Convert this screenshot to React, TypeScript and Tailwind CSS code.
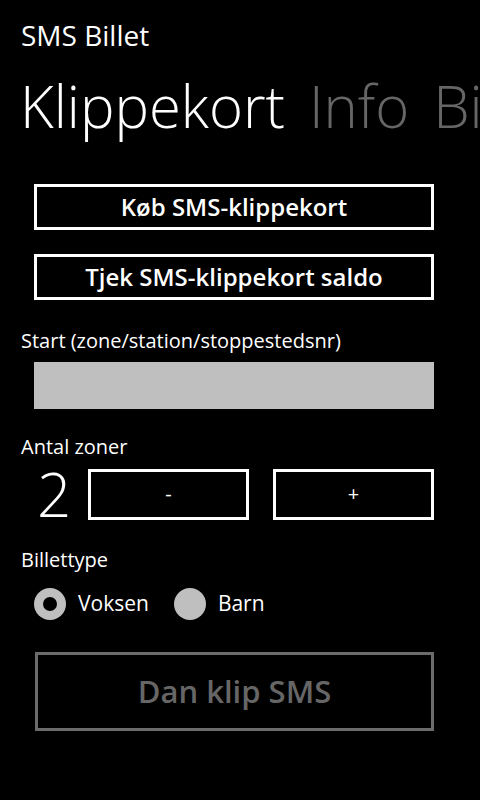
import React from "react";

export default function App() {
  const font = { fontFamily: '"Open Sans", "Noto Sans", sans-serif' };
  return (
    <div className="w-[480px] h-[800px] bg-black text-white overflow-hidden" style={font}>
      <div className="pl-[21px] pt-[16px] text-[28px] leading-[38px]">SMS Billet</div>
      <div className="flex pl-[20px] mt-[12px] gap-[24px] text-[58px] leading-[80px] font-light whitespace-nowrap">
        <span className="text-white">Klippekort</span>
        <span className="text-[#666666]">Info</span>
        <span className="text-[#666666]">Billet</span>
      </div>
      <div className="flex flex-col px-[34px] mt-[38px] w-[468px]">
        <button className="h-[46px] border-[3px] border-white text-[24px] font-semibold flex items-center justify-center">Køb SMS-klippekort</button>
        <button className="h-[46px] mt-[24px] border-[3px] border-white text-[24px] font-semibold flex items-center justify-center">Tjek SMS-klippekort saldo</button>
      </div>
      <div className="pl-[21px] mt-[29px] text-[20px] leading-[24px]">Start (zone/station/stoppestedsnr)</div>
      <div className="mx-[34px] mt-[9px] h-[47px] w-[400px] bg-[#bfbfbf]"></div>
      <div className="pl-[21px] mt-[26px] text-[20px] leading-[24px]">Antal zoner</div>
      <div className="flex items-center pl-[37px] mt-[5px]">
        <span className="w-[51px] text-[60px] leading-[60px] font-light">2</span>
        <button className="w-[161px] h-[51px] border-[3px] border-white text-[20px]">-</button>
        <button className="w-[161px] h-[51px] ml-[24px] border-[3px] border-white text-[20px]">+</button>
      </div>
      <div className="pl-[21px] mt-[24px] text-[20px] leading-[24px]">Billettype</div>
      <div className="flex items-center pl-[34px] mt-[16px]">
        <span className="w-[32px] h-[32px] rounded-full bg-[#bfbfbf] flex items-center justify-center">
          <span className="w-[14px] h-[14px] rounded-full bg-black"></span>
        </span>
        <span className="ml-[12px] text-[21px]">Voksen</span>
        <span className="ml-[25px] w-[32px] h-[32px] rounded-full bg-[#bfbfbf]"></span>
        <span className="ml-[12px] text-[21px]">Barn</span>
      </div>
      <button className="ml-[35px] mt-[32px] w-[399px] h-[79px] border-[3px] border-[#6b6b6b] text-[#666666] text-[31px] font-semibold flex items-center justify-center">Dan klip SMS</button>
    </div>
  );
}
